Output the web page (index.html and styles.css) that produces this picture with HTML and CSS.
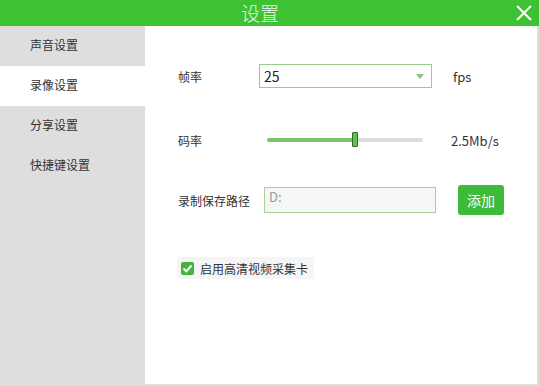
FILE: index.html
```html
<!DOCTYPE html>
<html lang="zh-CN">
<head>
  <meta charset="UTF-8">
  <title>设置</title>
  <link rel="stylesheet" href="styles.css">
</head>
<body>
  <div class="window">
    <!-- Title bar -->
    <div class="titlebar">
      <span class="title">设置</span>
      <svg class="close" width="18" height="18" viewBox="0 0 18 18">
        <path d="M2 2 L16 16 M16 2 L2 16" stroke="#fff" stroke-width="2" fill="none"/>
      </svg>
    </div>

    <div class="main">
      <ul class="sidebar">
        <li class="nav-item">声音设置</li>
        <li class="nav-item active">录像设置</li>
        <li class="nav-item">分享设置</li>
        <li class="nav-item">快捷键设置</li>
      </ul>

      <div class="content">
        <div class="row row-fps">
          <span class="label">帧率</span>
          <div class="select">
            <span>25</span>
            <span class="arrow"></span>
          </div>
          <span class="unit">fps</span>
        </div>

        <div class="row row-rate">
          <span class="label">码率</span>
          <div class="slider">
            <div class="slider-fill"></div>
            <div class="slider-thumb"></div>
          </div>
          <span class="unit unit-rate">2.5Mb/s</span>
        </div>

        <div class="row row-path">
          <span class="label label-path">录制保存路径</span>
          <div class="path-input">D:</div>
          <button class="add-btn">添加</button>
        </div>

        <label class="check-row">
          <span class="checkbox">
            <svg width="13" height="13" viewBox="0 0 13 13">
              <path d="M2.5 6.5 L5.3 9.3 L10.5 3.5" stroke="#fff" stroke-width="2" fill="none"/>
            </svg>
          </span>
          启用高清视频采集卡
        </label>
      </div>
    </div>
  </div>
</body>
</html>
```

FILE: styles.css
```css
body {
  margin: 0;
  font-family: "Noto Sans CJK SC", "Microsoft YaHei", sans-serif;
  font-size: 12px;
  color: #333;
}

.window {
  width: 539px;
  height: 386px;
  background: #dedede;
  display: flex;
  flex-direction: column;
}

/* Title bar */
.titlebar {
  height: 26px;
  background: #3cc232;
  position: relative;
  display: flex;
  justify-content: center;
  align-items: center;
}

.title {
  color: #eaf8e6;
  font-size: 19px;
  font-weight: 300;
  line-height: 26px;
  padding-right: 19px;
}

.close {
  position: absolute;
  right: 6px;
  top: 4px;
}

/* Body */
.main {
  display: flex;
  height: 358px;
}

.sidebar {
  list-style: none;
  margin: 0;
  padding: 0;
  width: 145px;
  background: #dedede;
}

.nav-item {
  height: 40px;
  line-height: 38px;
  padding-left: 30px;
  color: #333;
}

.nav-item.active {
  background: #fff;
}

.content {
  flex: 1;
  background: #fff;
  margin-right: 2px;
  padding-left: 33px;
}

.row {
  display: flex;
  align-items: center;
}

.label {
  width: 81px;
}

/* Frame rate */
.row-fps {
  margin-top: 38px;
  height: 24px;
}

.select {
  height: 22px;
  border: 1px solid #9ccb8c;
  display: flex;
  align-items: center;
  justify-content: space-between;
  padding-left: 4px;
  padding-right: 7px;
  width: 160px;
  font-size: 14px;
  color: #222;
}

.arrow {
  width: 0;
  height: 0;
  border-left: 4px solid transparent;
  border-right: 4px solid transparent;
  border-top: 5px solid #8fbf8a;
}

.unit {
  margin-left: 21px;
  font-size: 13px;
}

/* Bit rate */
.row-rate {
  margin-top: 44px;
  height: 16px;
}

.slider {
  position: relative;
  width: 156px;
  height: 4px;
  background: #dcdcdc;
  margin-left: 8px;
  border-radius: 2px;
}

.slider-fill {
  width: 88px;
  height: 4px;
  background: #7cc46c;
  border-radius: 2px;
}

.slider-thumb {
  position: absolute;
  left: 85px;
  top: -6px;
  width: 4px;
  height: 13px;
  background: #5bc24a;
  border: 1px solid #2f6b22;
  border-radius: 1px;
}

.unit-rate {
  margin-left: 28px;
}

/* Save path */
.row-path {
  margin-top: 37px;
  height: 30px;
}

.label-path {
  width: 86px;
}

.path-input {
  width: 166px;
  height: 24px;
  border: 1px solid #a9d29b;
  background: #f5f7f5;
  color: #999;
  padding-left: 4px;
  line-height: 18px;
  font-size: 13px;
}

.add-btn {
  margin-left: 22px;
  width: 46px;
  height: 30px;
  border: none;
  border-radius: 3px;
  background: #3dba38;
  color: #fff;
  font-family: inherit;
  font-size: 14px;
  padding: 0;
}

/* Capture card checkbox */
.check-row {
  margin-top: 42px;
  margin-left: -1px;
  display: inline-flex;
  align-items: center;
  gap: 6px;
  height: 22px;
  padding: 0 6px 0 4px;
  background: #f5f5f5;
}

.checkbox {
  width: 13px;
  height: 13px;
  background: #45b43a;
  border-radius: 2px;
  display: flex;
}
```
